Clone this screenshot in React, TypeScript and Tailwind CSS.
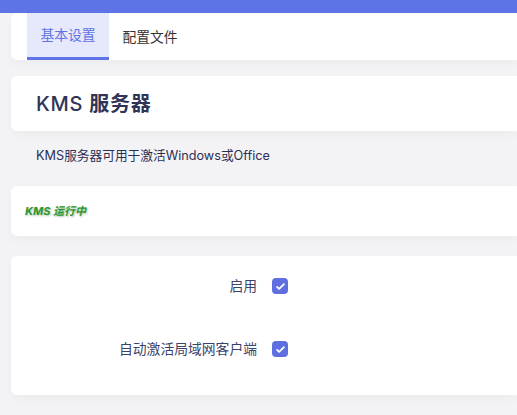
import React from 'react'

const font = { fontFamily: '"Inter", "Noto Sans CJK SC", sans-serif' }

function Check() {
  return (
    <span className="flex h-4 w-4 items-center justify-center rounded-[4px] bg-[#5f6fe0]">
      <svg viewBox="0 0 16 16" className="h-[11px] w-[11px]" fill="none">
        <path d="M3 8.5l3 3 7-7" stroke="white" strokeWidth="2.6" strokeLinecap="round" strokeLinejoin="round" />
      </svg>
    </span>
  )
}

function Row({ label }: { label: string }) {
  return (
    <div className="flex h-5 items-center">
      <div className="w-[246px] text-right text-[13.8px] leading-5 text-[#3c4369]">{label}</div>
      <div className="ml-[15px]">
        <Check />
      </div>
    </div>
  )
}

export default function App() {
  return (
    <div className="min-h-[415px] w-[517px] overflow-hidden bg-[#f3f3f5]" style={font}>
      <div className="relative">
        <div className="absolute inset-x-0 top-0 h-[13px] bg-[#5e73e5]" />
        <div className="relative ml-[11px] pt-[13px]">
          {/* tabs */}
          <div className="flex h-[47px] rounded-l-[6px] bg-white pl-4 shadow-[0_4px_10px_rgba(0,0,0,0.03)]">
            <div className="flex w-[82px] items-center justify-center border-b-[3px] border-[#5e73e5] bg-[#e6e8fb] pt-px text-[13.8px] text-[#5e73e5]">
              基本设置
            </div>
            <div className="flex w-[82px] items-center justify-center pt-px text-[13.8px] text-[#333]">
              配置文件
            </div>
          </div>

          {/* title */}
          <div className="mt-4 flex h-[55px] items-center rounded-l-[6px] bg-white pl-[25px] shadow-[0_4px_10px_rgba(0,0,0,0.03)]">
            <h1 className="text-[20px] font-semibold tracking-[0.8px] text-[#303456]">
              <span className="font-medium">KMS</span> 服务器
            </h1>
          </div>

          <p className="mt-[16px] pl-[25px] text-[12.7px] leading-[18px] text-[#2b2f55]">KMS服务器可用于激活Windows或Office</p>

          {/* status */}
          <div className="mt-[21px] flex h-[50px] items-center rounded-l-[6px] bg-white pl-[14px] shadow-[0_4px_10px_rgba(0,0,0,0.03)]">
            <span className="text-[11px] font-bold italic text-[#2f962f] [text-shadow:1px_1px_2px_rgba(0,80,0,0.35)]">
              KMS 运行中
            </span>
          </div>

          {/* settings */}
          <div className="mt-[20px] flex h-[139px] flex-col gap-[43px] rounded-l-[6px] bg-white pt-5 shadow-[0_4px_10px_rgba(0,0,0,0.03)]">
            <Row label="启用" />
            <Row label="自动激活局域网客户端" />
          </div>
        </div>
      </div>
    </div>
  )
}
